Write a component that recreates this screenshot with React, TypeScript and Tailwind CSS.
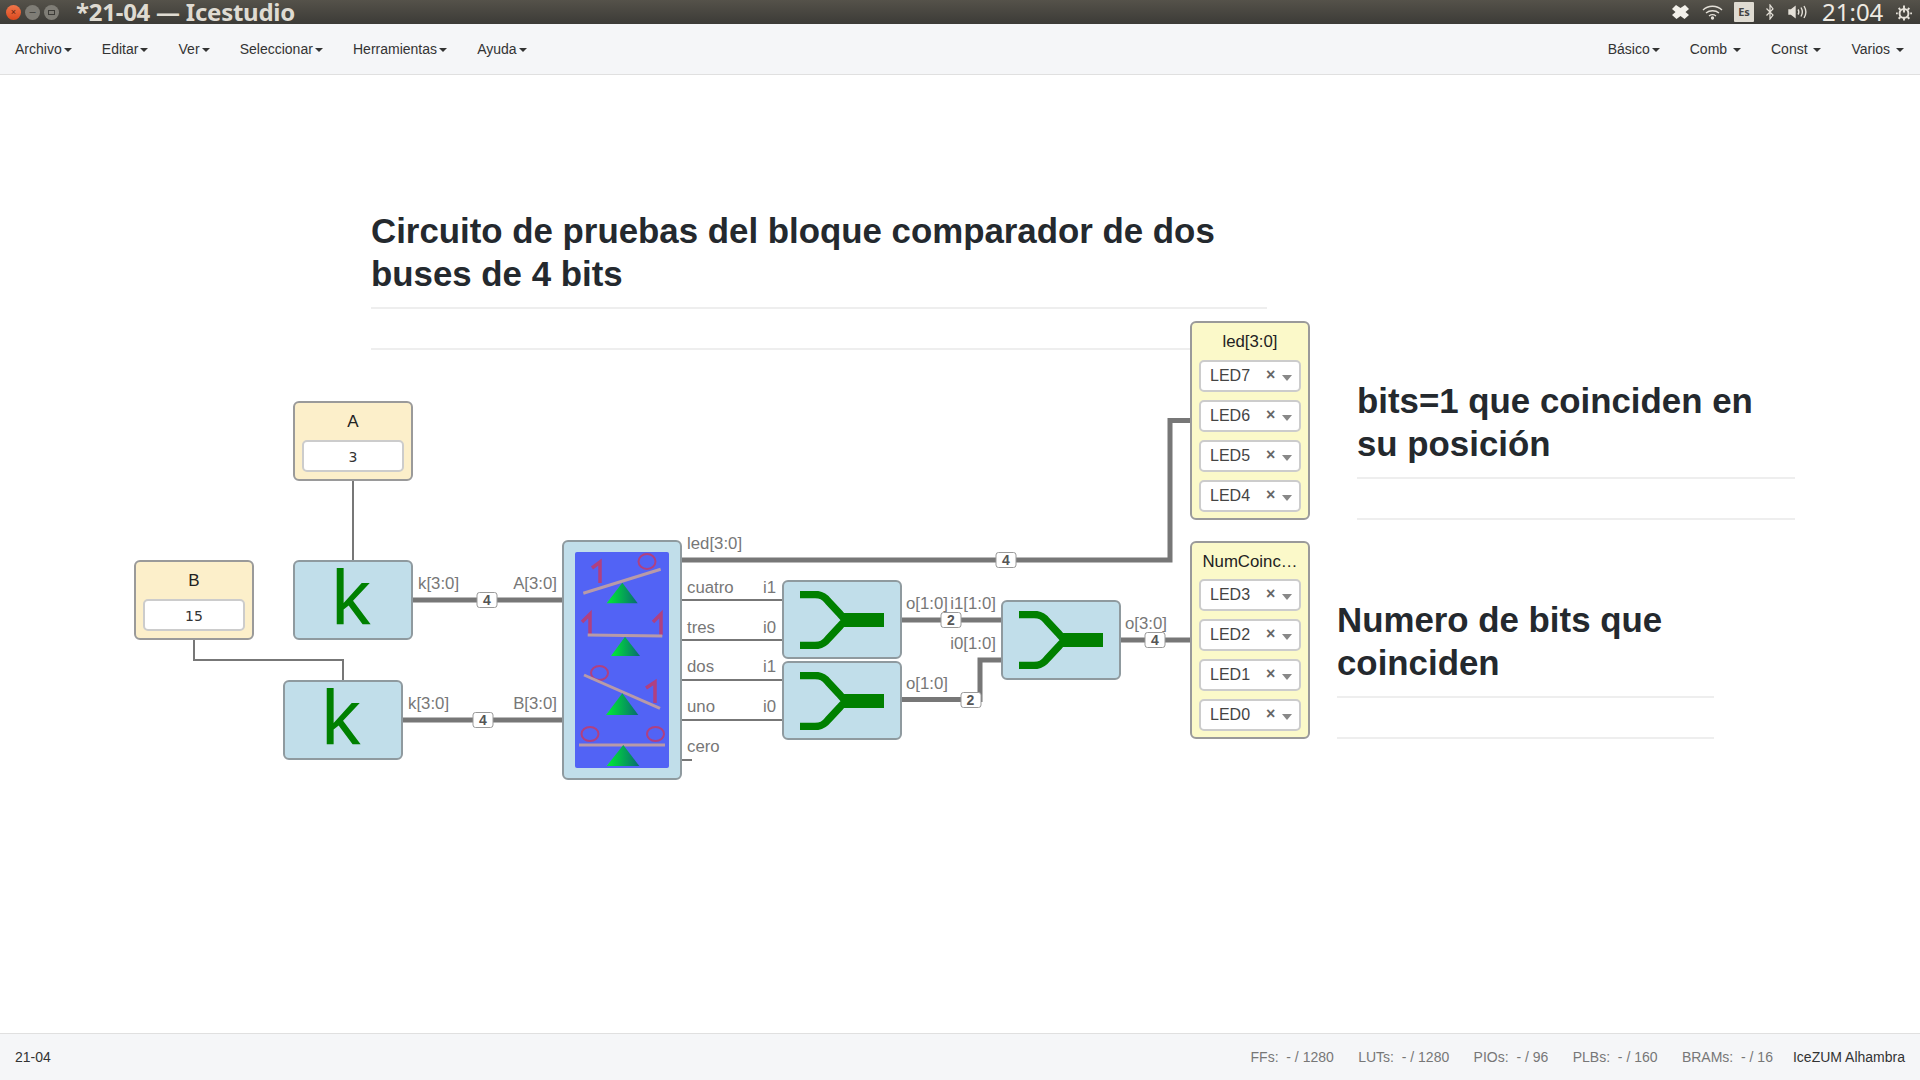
import React from "react";

const F = "[font-family:'Liberation_Sans',Arial,sans-serif]";

function Caret() {
  return <span className="inline-block ml-[2px] align-middle w-0 h-0 border-x-[4px] border-x-transparent border-t-[4px] border-t-[#333]" />;
}

function Menu({ label, gap }: { label: string; gap?: boolean }) {
  return (
    <span className="text-[#333] text-sm whitespace-nowrap">
      {label}
      {gap ? " " : ""}
      <Caret />
    </span>
  );
}

function Wire({ d, w = 5 }: { d: string; w?: number }) {
  return <path d={d} fill="none" stroke="#777" strokeWidth={w} />;
}

function Label({ x, y, t, right }: { x: number; y: number; t: string; right?: boolean }) {
  return (
    <span
      className="absolute text-[16.8px] leading-[20px] text-[#777] whitespace-nowrap"
      style={right ? { right: 1920 - x, top: y + 1 } : { left: x, top: y + 1 }}
    >
      {t}
    </span>
  );
}

function Badge({ x, y, t }: { x: number; y: number; t: string }) {
  return (
    <span
      className="absolute w-[21px] h-[16px] -translate-x-1/2 -translate-y-1/2 bg-white border border-[#999] rounded-[3px] text-[14px] leading-[14px] font-bold text-[#555] text-center"
      style={{ left: x, top: y }}
    >
      {t}
    </span>
  );
}

function Constant({ x, y, name, value }: { x: number; y: number; name: string; value: string }) {
  return (
    <div
      className="absolute w-[120px] h-[80px] rounded-[6px] border-2 border-[#9a9a9a] bg-[#fcefca] flex flex-col items-center px-[7px]"
      style={{ left: x, top: y }}
    >
      <div className="h-[37px] pt-[6px] text-[17px] leading-[26px] text-[#222]">{name}</div>
      <div className="w-full h-[32px] bg-white border-2 border-[#ccc] rounded-[5px] text-center text-[14px] leading-[30px] text-[#333] font-['DejaVu_Sans']">
        {value}
      </div>
    </div>
  );
}

function Block({ x, y, w = 120, h = 80, children }: { x: number; y: number; w?: number; h?: number; children?: React.ReactNode }) {
  return (
    <div
      className="absolute rounded-[6px] border-2 border-[#8f9a9f] bg-[#c1deea] flex items-center justify-center"
      style={{ left: x, top: y, width: w, height: h }}
    >
      {children}
    </div>
  );
}

function K() {
  return <span className="text-[#008000] text-[78px] leading-[76px] -mt-[4px] -ml-[4px]">k</span>;
}

function Join() {
  return (
    <svg width="84" height="58" viewBox="0 0 84 58">
      <path
        d="M0 3.500H15C21 3.500 24 5 28 10L40 23C43 27 46 29 50 29C46 29 43 31 40 35L28 48C24 53 21 54.500 15 54.500H0"
        fill="none"
        stroke="#008000"
        strokeWidth="7.500"
      />
      <rect x="44" y="22" width="40" height="14" fill="#008000" />
    </svg>
  );
}

function Pin({ x, y, name, leds, tall }: { x: number; y: number; name: string; leds: string[]; tall?: boolean }) {
  return (
    <div
      className={`absolute w-[120px] rounded-[6px] border-2 border-[#9a9a9a] bg-[#fbf9c9] flex flex-col items-center px-[7px] ${tall ? "pb-[6px]" : "pb-[6px]"}`}
      style={{ left: x, top: y }}
    >
      <div className={`text-[16.8px] leading-[38px] text-[#222] whitespace-nowrap ${tall ? "h-[37px]" : "h-[36px]"}`}>{name}</div>
      <div className="w-full flex flex-col gap-[8px]">
        {leds.map((l) => (
          <div key={l} className="h-[32px] bg-white border-2 border-[#ccc] rounded-[5px] flex items-center pl-[9px] text-[16px] text-[#444]">
            <span className="w-[56px]">{l}</span>
            <span className="w-[12px] text-[16px] font-bold text-[#666] -mt-[3px]">×</span>
            <span className="ml-[4px] mt-[3px] w-0 h-0 border-x-[5px] border-x-transparent border-t-[6px] border-t-[#888]" />
          </div>
        ))}
      </div>
    </div>
  );
}

function Note({ x, y, w, lines }: { x: number; y: number; w: number; lines: string[] }) {
  return (
    <div className="absolute" style={{ left: x, top: y, width: w }}>
      <h1 className="text-[34.85px] leading-[43px] font-bold text-[#24292e] border-b-2 border-[#eeeeee] pt-[1px] pb-[12px]">
        {lines.map((l) => (
          <div key={l} className="whitespace-nowrap">{l}</div>
        ))}
      </h1>
      <div className="mt-[39px] border-t-2 border-[#eeeeee]" />
    </div>
  );
}

function One({ x, top, bottom, fx, fy }: { x: number; top: number; bottom: number; fx: number; fy: number }) {
  return <path d={`M${x} ${bottom}V${top}L${fx} ${fy}`} fill="none" stroke="#b04080" strokeWidth="3.500" />;
}

function Balance() {
  const rose = "#b04080";
  const beam = "#b89aa8";
  return (
    <svg width="94" height="216" viewBox="0 0 94 216" className="block">
      <defs>
        <linearGradient id="tri" x1="0" x2="1" y1="0" y2="0">
          <stop offset="0" stopColor="#00ee33" />
          <stop offset="1" stopColor="#086a70" />
        </linearGradient>
      </defs>
      <rect width="94" height="216" rx="2" fill="#5263f5" />
      <One x={25} top={10} bottom={31} fx={17} fy={16} />
      <ellipse cx="72" cy="9.500" rx="8.500" ry="7.500" fill="none" stroke={rose} strokeWidth="2" />
      <path d="M8.300 41.300L85.700 17.300" stroke={beam} strokeWidth="3" />
      <path d="M47.300 30.700L31.700 51.300H62.700Z" fill="url(#tri)" />
      <One x={15} top={62} bottom={83} fx={7} fy={70} />
      <One x={86} top={62} bottom={83} fx={78} fy={70} />
      <path d="M12.700 83L87.300 84" stroke={beam} strokeWidth="3" />
      <path d="M50 84.700L36 104H65Z" fill="url(#tri)" />
      <ellipse cx="24.500" cy="121" rx="8.500" ry="7" fill="none" stroke={rose} strokeWidth="2" />
      <One x={80} top={130} bottom={151} fx={71} fy={136} />
      <path d="M9 123L85 156.300" stroke={beam} strokeWidth="3" />
      <path d="M47.300 141.300L31 163H63.300Z" fill="url(#tri)" />
      <ellipse cx="15" cy="182" rx="8.500" ry="7" fill="none" stroke={rose} strokeWidth="2" />
      <ellipse cx="80.500" cy="182" rx="8.500" ry="7" fill="none" stroke={rose} strokeWidth="2" />
      <path d="M4 193H90" stroke={beam} strokeWidth="3" />
      <path d="M48.300 193L31.700 214H64.300Z" fill="url(#tri)" />
    </svg>
  );
}

function Tray() {
  return (
    <div className="flex items-center pr-[8px] text-[#eeeae2]">
      <svg width="17" height="15" viewBox="0 0 17 15"><path d="M4 0L8.500 3L13 0L17 4L13.500 7L17 10L12.500 14L8.500 11L4.500 14L0 10L3.500 7L0 4Z" fill="#f2f0ea" /></svg>
      <svg width="21" height="16" viewBox="0 0 21 16" fill="none" stroke="#e4e0d8" strokeWidth="1.300" className="ml-[13px]"><path d="M1 6C6 1 15 1 20 6M4 9C7.500 6 13.500 6 17 9M7 12C9 10.500 12 10.500 14 12" /><circle cx="10.500" cy="14" r="1" fill="#e4e0d8" /></svg>
      <span className="ml-[11px] w-[20px] h-[20px] bg-[#dfdbd2] rounded-[1px] text-[#444] text-[11px] leading-[20px] text-center font-bold font-['Noto_Sans']">Es</span>
      <svg width="8" height="16" viewBox="0 0 8 16" fill="none" stroke="#e4e0d8" strokeWidth="1.200" className="ml-[12px]"><path d="M0.500 4.500L7 11L4 15V1L7 5L0.500 11.500" /></svg>
      <svg width="19" height="14" viewBox="0 0 19 14" fill="none" stroke="#e4e0d8" strokeWidth="1.400" className="ml-[14px]"><path d="M1 5H3L7 2V12L3 9H1Z" fill="#e4e0d8" /><path d="M10 4.500C11 6 11 8 10 9.500M13 2.500C14.500 5 14.500 9 13 11.500M16 1C18.500 5 18.500 9 16 13" /></svg>
      <span className="ml-[15px] w-[60px] text-[24px] leading-[24px] font-['Noto_Sans'] whitespace-nowrap">21:04</span>
      <svg width="16" height="17" viewBox="0 0 18 18" fill="none" stroke="#e4e0d8" strokeWidth="2.200" className="ml-[14px]"><circle cx="9" cy="10" r="5" /><path d="M9 1V9M9 15V18M2 10H0M18 10H16M3 4L5 6M15 4L13 6M3 16L5 14M15 16L13 14" /></svg>
    </div>
  );
}

export default function App() {
  return (
    <div className={`w-[1920px] h-[1080px] flex flex-col bg-white overflow-hidden ${F}`}>
      <header className="h-[24px] shrink-0 flex items-center justify-between pl-[6px] bg-gradient-to-b from-[#55524a] to-[#3c3b37]">
        <div className="flex items-center">
          <span className="w-[15px] h-[15px] rounded-full bg-gradient-to-b from-[#f0764a] to-[#d9481c] text-[9px] leading-[15px] text-center text-[#5a2210]">×</span>
          <span className="ml-[4px] w-[15px] h-[15px] rounded-full bg-[#7f7d76] text-[11px] leading-[13px] text-center text-[#3c3b37]">–</span>
          <span className="ml-[4px] w-[15px] h-[15px] rounded-full bg-[#7f7d76] flex items-center justify-center"><span className="w-[7px] h-[5px] border border-[#3c3b37]" /></span>
          <span className="ml-[17px] text-[24px] leading-[24px] font-bold tracking-[-0.25px] text-[#dfdbd2] font-['Noto_Sans'] whitespace-nowrap">*21-04 — Icestudio</span>
        </div>
        <Tray />
      </header>

      <nav className="h-[51px] shrink-0 flex items-center justify-between pl-[15px] pr-[16px] bg-[#f5f6f8] border-b border-[#e0e0e0]">
        <div className="flex gap-[30.15px]">
          <Menu label="Archivo" />
          <Menu label="Editar" />
          <Menu label="Ver" />
          <Menu label="Seleccionar" />
          <Menu label="Herramientas" />
          <Menu label="Ayuda" />
        </div>
        <div className="flex gap-[30px]">
          <Menu label="Básico" />
          <Menu label="Comb" gap />
          <Menu label="Const" gap />
          <Menu label="Varios" gap />
        </div>
      </nav>

      <main className="relative flex-1">
        {/* free canvas: offset by the bars above (75px) */}
        <div className="absolute left-0 -top-[75px] w-[1920px] h-[1080px]">
          <svg width="1920" height="1080" className="absolute left-0 top-0">
            <Wire d="M353 480V561" w={2} />
            <Wire d="M194 639V660H343V681" w={2} />
            <Wire d="M412 600H563" />
            <Wire d="M402 720H563" />
            <Wire d="M681 560H1170V420.500H1191" />
            <Wire d="M681 600H782" w={2} />
            <Wire d="M681 640H782" w={2} />
            <Wire d="M681 680H782" w={2} />
            <Wire d="M681 720H782" w={2} />
            <Wire d="M681 760H692" w={2} />
            <Wire d="M901 620H1002" />
            <Wire d="M901 699.500H980V660H1002" />
            <Wire d="M1120 640H1191" />
          </svg>

          <Note x={371} y={208} w={896} lines={["Circuito de pruebas del bloque comparador de dos", "buses de 4 bits"]} />
          <Note x={1357} y={378} w={438} lines={["bits=1 que coinciden en", "su posición"]} />
          <Note x={1337} y={597} w={377} lines={["Numero de bits que", "coinciden"]} />

          <Constant x={293} y={401} name="A" value="3" />
          <Constant x={134} y={560} name="B" value="15" />
          <Block x={293} y={560}><K /></Block>
          <Block x={283} y={680}><K /></Block>

          <Block x={562} y={540} w={120} h={240}><Balance /></Block>

          <Block x={782} y={580} h={79}><Join /></Block>
          <Block x={782} y={661} h={79}><Join /></Block>
          <Block x={1001} y={600}><Join /></Block>

          <Pin x={1190} y={321} name="led[3:0]" leds={["LED7", "LED6", "LED5", "LED4"]} tall />
          <Pin x={1190} y={541} name="NumCoinc…" leds={["LED3", "LED2", "LED1", "LED0"]} />

          <Label x={418} y={573} t="k[3:0]" />
          <Label x={557} y={573} t="A[3:0]" right />
          <Label x={408} y={693} t="k[3:0]" />
          <Label x={557} y={693} t="B[3:0]" right />
          <Label x={687} y={533} t="led[3:0]" />
          <Label x={687} y={577} t="cuatro" />
          <Label x={687} y={617} t="tres" />
          <Label x={687} y={656} t="dos" />
          <Label x={687} y={696} t="uno" />
          <Label x={687} y={736} t="cero" />
          <Label x={776} y={577} t="i1" right />
          <Label x={776} y={617} t="i0" right />
          <Label x={776} y={656} t="i1" right />
          <Label x={776} y={696} t="i0" right />
          <Label x={906} y={593} t="o[1:0]" />
          <Label x={906} y={673} t="o[1:0]" />
          <Label x={996} y={593} t="i1[1:0]" right />
          <Label x={996} y={633} t="i0[1:0]" right />
          <Label x={1125} y={613} t="o[3:0]" />

          <Badge x={487} y={600} t="4" />
          <Badge x={483} y={720} t="4" />
          <Badge x={1006} y={560} t="4" />
          <Badge x={951} y={620} t="2" />
          <Badge x={970.500} y={700} t="2" />
          <Badge x={1155} y={640} t="4" />
        </div>
      </main>

      <footer className="h-[47px] shrink-0 flex items-center justify-between px-[15px] bg-[#f5f6f8] border-t border-[#e0e0e0] text-sm">
        <span className="text-[#333]">21-04</span>
        <div className="flex items-center">
          <span className="text-[#777] whitespace-pre flex gap-[24.4px]">
            <span>FFs:  - / 1280</span>
            <span>LUTs:  - / 1280</span>
            <span>PIOs:  - / 96</span>
            <span>PLBs:  - / 160</span>
            <span>BRAMs:  - / 16</span>
          </span>
          <span className="ml-[20px] text-[#333]">IceZUM Alhambra</span>
        </div>
      </footer>
    </div>
  );
}
